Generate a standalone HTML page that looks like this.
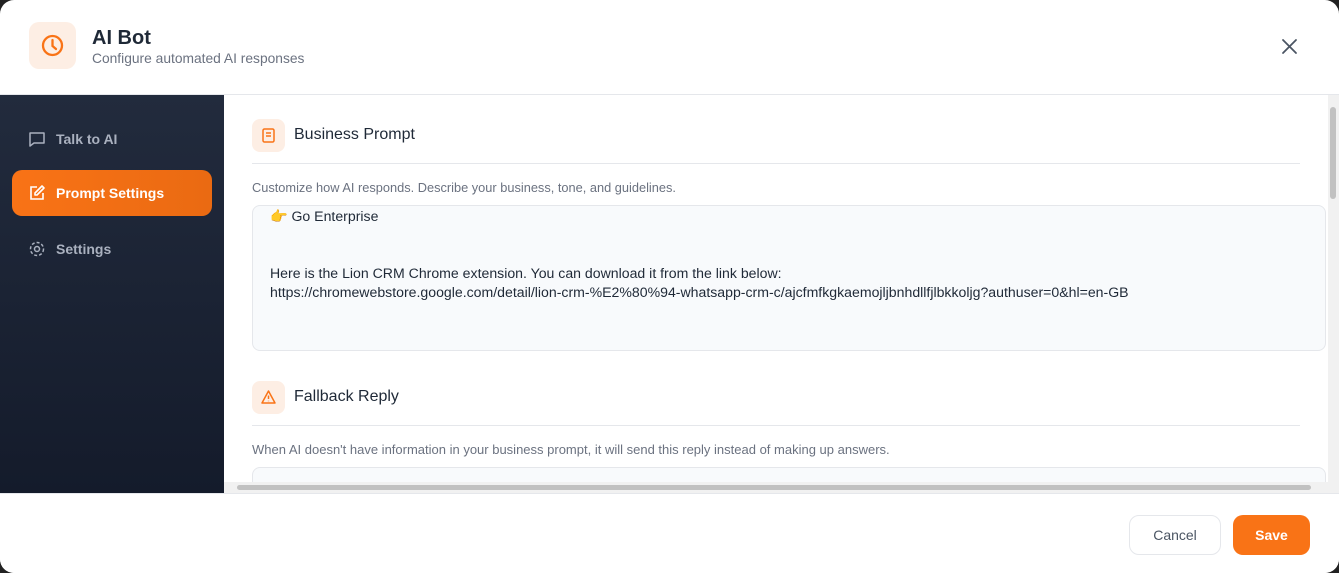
<!DOCTYPE html>
<html><head><style>
*{box-sizing:border-box;margin:0;padding:0}
body{width:1339px;height:573px;background:#222;font-family:"Liberation Sans",sans-serif;overflow:hidden;position:relative}
.modal{position:absolute;left:0;top:0;width:1339px;height:573px;background:#fff;border-radius:14px;overflow:hidden}
.hdr{position:absolute;left:0;top:0;width:1339px;height:95px;border-bottom:1px solid #e5e7eb}
.logo{position:absolute;left:29px;top:22px;width:47px;height:47px;border-radius:10px;background:#fdeee4}
.side{position:absolute;left:0;top:95px;width:224px;height:398px;background:linear-gradient(180deg,#222b3d,#141b2b)}
.nav{position:absolute;left:12px;width:200px;height:46px;border-radius:10px;color:#aab1bf;font-size:14px;font-weight:bold;display:flex;align-items:center;padding-left:16px;gap:10px}
.nav.act{background:linear-gradient(90deg,#f97316,#ea6a12);color:#fff}
.ib{position:absolute;width:33px;height:33px;border-radius:8px;background:#fdeee4;left:252px}
.t{position:absolute;left:294px;font-size:16px;color:#1f2937}
.div{position:absolute;left:252px;width:1048px;height:1px;background:#e5e7eb}
.d{position:absolute;left:252px;font-size:12.8px;color:#6b7280}
.ta{position:absolute;left:252px;width:1074px;background:#f8fafc;border:1px solid #e5e7eb;border-radius:8px;font-size:14.1px;color:#1f2937}
.ftr{position:absolute;left:0;top:493px;width:1339px;height:80px;border-top:1px solid #e5e7eb;background:#fff}
.btn{position:absolute;top:21px;height:40px;border-radius:10px;font-size:14px;display:flex;align-items:center;justify-content:center}
</style></head><body>
<div class="modal">
<div class="hdr">
 <div class="logo"><svg width="47" height="47" viewBox="0 0 47 47"><circle cx="23.5" cy="23.5" r="9.5" fill="none" stroke="#f97316" stroke-width="2.3"/><path d="M23.5 18v6l3.5 3" fill="none" stroke="#f97316" stroke-width="2.3" stroke-linecap="round"/></svg></div>
 <div style="position:absolute;left:92px;top:27px;font-size:20px;font-weight:bold;color:#1f2937">AI Bot</div>
 <div style="position:absolute;left:92px;top:51px;font-size:13.8px;color:#6b7280">Configure automated AI responses</div>
 <svg style="position:absolute;left:1280px;top:37px" width="19" height="19" viewBox="0 0 19 19"><path d="M3 3l13 13M16 3L3 16" stroke="#4b5563" stroke-width="1.8" stroke-linecap="round"/></svg>
</div>
<div class="side">
 <div class="nav" style="top:21px"><svg width="18" height="18" viewBox="0 0 18 18"><path d="M2 3h14v10H6l-4 3z" fill="none" stroke="#aab1bf" stroke-width="1.5" stroke-linejoin="round"/></svg>Talk to AI</div>
 <div class="nav act" style="top:75px"><svg width="18" height="18" viewBox="0 0 18 18"><path d="M9 3H3v12h12V9" fill="none" stroke="#fff" stroke-width="1.6"/><path d="M14 2l2 2-7 7H7V9z" fill="none" stroke="#fff" stroke-width="1.6" stroke-linejoin="round"/></svg>Prompt Settings</div>
 <div class="nav" style="top:131px"><svg width="18" height="18" viewBox="0 0 18 18"><circle cx="9" cy="9" r="2.5" fill="none" stroke="#aab1bf" stroke-width="1.5"/><circle cx="9" cy="9" r="6.5" fill="none" stroke="#aab1bf" stroke-width="1.5" stroke-dasharray="3 2"/></svg>Settings</div>
</div>
<div class="ib" style="top:119px"><svg width="33" height="33" viewBox="0 0 33 33"><rect x="11" y="10" width="11" height="13" rx="1.5" fill="none" stroke="#f97316" stroke-width="1.5"/><path d="M14 14h5M14 17h5" stroke="#f97316" stroke-width="1.4"/></svg></div>
<div class="t" style="top:126px">Business Prompt</div>
<div class="div" style="top:163px"></div>
<div class="d" style="top:180px">Customize how AI responds. Describe your business, tone, and guidelines.</div>
<div class="ta" style="top:205px;height:146px;padding:1px 0 0 17px;line-height:19px">
 <div>👉 Go Enterprise</div><div>&nbsp;</div><div style="margin-top:19px">Here is the Lion CRM Chrome extension. You can download it from the link below:</div>
 <div>https://chromewebstore.google.com/detail/lion-crm-%E2%80%94-whatsapp-crm-c/ajcfmfkgkaemojljbnhdllfjlbkkoljg?authuser=0&amp;hl=en-GB</div>
</div>
<div class="ib" style="top:381px"><svg width="33" height="33" viewBox="0 0 33 33"><path d="M16.5 10l6.5 12H10z" fill="none" stroke="#f97316" stroke-width="1.5" stroke-linejoin="round"/><path d="M16.5 14.5v3.5M16.5 19.8v.4" stroke="#f97316" stroke-width="1.5"/></svg></div>
<div class="t" style="top:388px">Fallback Reply</div>
<div class="div" style="top:425px"></div>
<div class="d" style="top:442px;font-size:13px">When AI doesn't have information in your business prompt, it will send this reply instead of making up answers.</div>
<div class="ta" style="top:467px;height:40px"></div>
<div style="position:absolute;left:224px;top:482px;width:1104px;height:11px;background:#f1f1f1"><div style="position:absolute;left:13px;top:3px;width:1074px;height:5px;border-radius:3px;background:#c1c1c1"></div></div>
<div style="position:absolute;left:1328px;top:95px;width:11px;height:398px;background:#f1f1f1"><div style="position:absolute;left:2px;top:12px;width:6px;height:92px;border-radius:3px;background:#c1c1c1"></div></div>
<div class="ftr">
 <div class="btn" style="left:1129px;width:92px;border:1px solid #e5e7eb;color:#4b5563">Cancel</div>
 <div class="btn" style="left:1233px;width:77px;background:#f97316;color:#fff;font-weight:bold">Save</div>
</div>
</div>
</body></html>
